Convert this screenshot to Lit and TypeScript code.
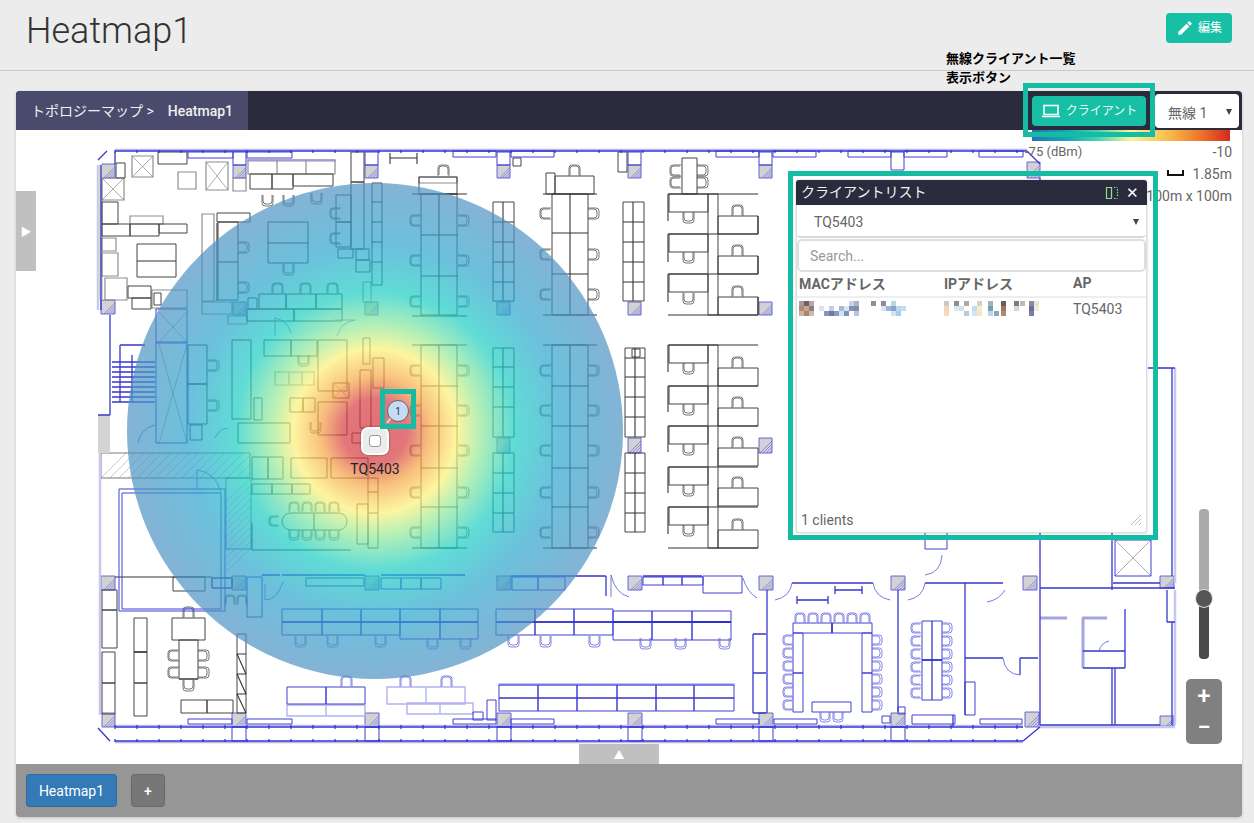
import { LitElement, html, css, svg } from "lit";
import { customElement } from "lit/decorators.js";

const rectP = (s: string) =>
  s.trim().split(/\s*;\s*/).filter(Boolean).map((t) => {
    const [x, y, w, h] = t.split(/\s+/).map(Number);
    return `M${x} ${y}h${w}v${h}h${-w}Z`;
  }).join("");
const lineP = (s: string) =>
  s.trim().split(/\s*;\s*/).filter(Boolean).map((t) => {
    const [a, b, c, d] = t.split(/\s+/).map(Number);
    return `M${a} ${b}L${c} ${d}`;
  }).join("");
const xBox = (s: string) =>
  s.trim().split(/\s*;\s*/).filter(Boolean).map((t) => {
    const [x, y, w, h] = t.split(/\s+/).map(Number);
    return `M${x} ${y}l${w} ${h}M${x + w} ${y}l${-w} ${h}`;
  }).join("");
const chair = (x: number, y: number, d: string, s = 11) => {
  const u = (o: number, z: number) => {
    const c = 3;
    if (d === "u") return `M${x + o} ${y}v${z - c}q0 ${c} ${c} ${c}h${z - 2 * c}q${c} 0 ${c} ${-c}v${-(z - c)}`;
    if (d === "d") return `M${x + o} ${y + z + o}v${-(z - c)}q0 ${-c} ${c} ${-c}h${z - 2 * c}q${c} 0 ${c} ${c}v${z - c}`;
    if (d === "l") return `M${x} ${y + o}h${z - c}q${c} 0 ${c} ${c}v${z - 2 * c}q0 ${c} ${-c} ${c}h${-(z - c)}`;
    return `M${x + z + o} ${y + o}h${-(z - c)}q${-c} 0 ${-c} ${c}v${z - 2 * c}q0 ${c} ${c} ${c}h${z - c}`;
  };
  return u(0, s) + u(1, s - 2);
};
const chairs = (s: string) =>
  s.trim().split(/\s*;\s*/).filter(Boolean).map((t) => {
    const [x, y, d, z] = t.split(/\s+/);
    return chair(+x, +y, d, z ? +z : 11);
  }).join("");

const pillars: [number, number, number, number][] = [];
for (const x of [233, 365, 497, 628, 759]) pillars.push([x, 165, 13, 13]);
for (const x of [233, 365, 497, 628, 759]) pillars.push([x, 302, 13, 13]);
for (const x of [497, 628, 759]) pillars.push([x, 438, 13, 15]);
for (const x of [232, 365, 497, 628, 759, 891, 1023]) pillars.push([x, 576, 14, 14]);
for (const x of [232, 365, 497, 628, 759, 891]) pillars.push([x, 713, 14, 14]);
pillars.push([101, 300, 14, 14], [101, 576, 14, 14], [102, 713, 13, 14], [102, 164, 13, 14], [1025, 712, 14, 15], [1160, 576, 14, 12], [1160, 716, 14, 10], [1027, 162, 13, 16]);
const pillarFill = pillars.map(([x, y, w, h]) => `M${x} ${y}h${w}v${h}h${-w}Z`).join("");
const pillarHatch = pillars.map(([x, y, w, h]) => {
  let p = "";
  for (let i = 1; i <= 4; i++) {
    const k = (i * h) / 5;
    p += `M${x + w} ${y + k}L${x + w - (h - k)} ${y + h}`;
  }
  return p;
}).join("");

let ticks = "";
for (let x = 115; x < 1025; x += 22) ticks += `M${x} 150v3M${x} 725v4M${x} 739v3`;

const kRects = rectP(`158 152 29 12; 116 163 9 15; 102 202 16 22; 102 224 28 12; 130 224 29 12; 159 224 28 9; 137 244 39 33; 128 286 23 12; 132 298 19 11; 154 293 7 12;
 250 174 22 15; 272 174 21 15; 293 174 40 12; 351 152 13 30; 351 182 13 67; 336 195 15 27; 336 222 15 25; 217 213 33 9; 218 222 20 78; 259 294 27 15; 286 294 30 15; 316 294 26 15; 247 309 47 12; 294 309 48 12;
 268 222 40 41; 338 249 15 9; 356 249 13 11; 356 260 14 12; 248 298 9 11; 372 183 10 102;
 188 345 19 39; 188 384 19 40; 232 340 19 79; 264 340 27 16; 291 340 26 16; 318 340 29 51; 333 383 16 15; 290 398 13 14; 303 398 12 14; 254 398 8 22; 318 402 29 33; 360 370 11 58; 373 358 11 30; 363 338 7 26; 238 423 52 20; 352 433 10 10; 190 425 12 15;
 421 194 36 121; 421 345 36 203; 419 177 38 17;
 493 202 21 99; 552 194 36 121; 555 176 39 18; 546 173 9 21; 623 202 21 99; 513 158 8 8; 618 152 9 20; 682 158 15 36;
 669 194 39 18; 669 234 39 18; 669 274 39 18; 718 216 40 18; 718 256 40 18; 718 297 40 18; 708 194 10 121;
 669 345 39 18; 669 386 39 18; 669 426 39 18; 669 467 39 18; 669 507 39 18; 718 368 40 18; 718 408 40 18; 718 448 40 18; 718 488 40 18; 718 530 40 18; 708 345 10 203;
 493 348 21 89; 493 453 21 79; 552 345 36 203; 625 348 20 89; 625 453 20 79; 632 349 8 8;
 173 577 32 14; 212 578 20 10; 172 618 33 22; 179 640 19 39; 181 700 26 13; 207 700 26 13; 237 634 9 79; 102 652 13 31; 102 683 13 31; 134 618 13 34; 134 652 13 31; 134 683 13 33; 102 610 15 38; 102 590 15 20;
 252 457 16 22; 268 457 15 22; 291 458 36 20; 331 458 37 20; 252 484 20 10; 272 484 20 10; 292 484 18 10; 368 478 10 70; 357 504 11 40`);
const gRects = rectP(`132 156 21 21; 178 172 18 17; 206 162 22 28; 102 178 22 22; 102 238 14 13; 102 253 16 23; 130 216 33 8; 105 278 22 22; 152 290 35 18; 248 160 29 14; 277 160 29 14; 306 160 29 14; 233 178 13 13; 202 214 12 87; 202 302 30 12; 228 316 19 8; 275 372 14 13; 289 372 13 13; 302 372 12 13; 419 177 38 6; 363 282 8 20`);
const kLines = lineP(`137 261 176 261; 217 223 217 301; 268 243 308 243; 218 262 238 262; 372 202 382 202; 372 222 382 222; 372 242 382 242; 372 262 382 262; 412 194 467 194; 412 316 467 316; 439 194 439 315; 421 235 458 235; 421 276 458 276;
 412 345 467 345; 412 548 467 548; 439 345 439 548; 421 386 458 386; 421 426 458 426; 421 468 458 468; 421 507 458 507;
 503 202 503 301; 493 222 514 222; 493 242 514 242; 493 262 514 262; 493 282 514 282; 543 194 597 194; 543 315 597 315; 570 194 570 315; 552 233 588 233; 552 274 588 274; 633 202 633 301; 623 222 644 222; 623 242 644 242; 623 262 644 262; 623 282 644 282;
 668 194 758 194; 668 234 758 234; 668 274 758 274; 668 315 758 315; 668 194 668 221; 668 234 668 262; 668 274 668 302; 758 216 758 234; 758 256 758 274; 758 297 758 315;
 668 345 758 345; 668 386 758 386; 668 426 758 426; 668 467 758 467; 668 507 758 507; 668 548 758 548; 668 345 668 372; 668 386 668 412; 668 426 668 452; 668 467 668 493; 668 507 668 534;
 503 348 503 437; 503 453 503 532; 493 367 514 367; 493 387 514 387; 493 407 514 407; 493 473 514 473; 493 493 514 493; 493 513 514 513; 543 345 597 345; 543 548 597 548; 570 345 570 548; 552 386 588 386; 552 426 588 426; 552 468 588 468; 552 507 588 507;
 635 348 635 437; 635 453 635 532; 625 358 645 358; 625 377 645 377; 625 397 645 397; 625 417 645 417; 625 473 645 473; 625 493 645 493; 625 513 645 513;
 237 654 246 654; 237 674 246 674; 237 694 246 694; 237 654 246 674; 237 674 246 694; 237 694 246 713; 115 577 212 577; 390 158 417 158; 390 153 390 164; 417 153 417 164; 179 679 198 679; 134 652 147 652;
 252 523 252 550; 252 550 351 550; 368 492 378 492; 368 513 378 513; 314 513 314 530`);
const bRects = rectP(`188 152 45 6; 247 152 45 6; 453 151 43 6; 511 151 43 6; 716 151 43 6; 773 151 43 6; 848 151 43 6; 904 151 43 6; 979 151 44 6; 233 152 13 13; 365 152 13 13; 497 152 13 13; 628 152 13 13; 759 152 13 13; 891 152 13 18;
 156 309 31 134; 156 342 31 1; 119 489 106 122; 122 493 99 116; 247 577 15 40; 212 578 20 10; 306 578 58 8; 381 578 20 11; 401 578 20 11; 421 578 20 11; 512 577 26 13; 538 577 27 13; 643 577 20 8; 663 577 19 8; 682 577 21 8; 703 576 39 17;
 282 609 40 13; 322 609 39 13; 361 609 39 13; 400 609 40 13; 440 609 38 13; 282 622 40 13; 322 622 39 13; 361 622 39 13; 400 622 40 17; 440 622 38 17; 496 609 39 13; 535 609 39 13; 574 609 39 13; 496 622 39 13; 535 622 39 13; 574 622 39 13; 613 611 39 29; 652 611 40 29; 692 611 39 29;
 287 687 39 17; 326 687 39 17; 499 685 39 26; 538 685 39 26; 577 685 40 26; 617 685 39 26; 656 685 38 26; 694 685 40 26; 487 700 9 20; 473 712 10 8; 188 719 44 5; 247 719 45 5; 453 719 43 5; 511 719 43 5; 716 719 43 5; 774 719 43 5; 980 719 42 5;
 232 727 14 14; 365 727 14 14; 497 727 14 14; 628 727 14 14; 759 727 14 14; 891 727 14 14; 793 623 39 10; 832 623 40 10; 793 633 10 40; 793 673 10 39; 862 633 10 40; 862 673 10 39; 812 702 39 10; 922 621 20 39; 922 660 20 40; 925 532 22 17; 965 682 10 33; 912 715 43 9; 1115 540 36 36; 882 716 8 7; 898 707 7 7`);
const bLines = lineP(`115 151 1027 151; 115 727 1023 727; 115 741 1023 741; 101 165 101 310; 115 152 115 164; 110 315 110 415; 98 415 110 415; 132 355 132 402; 112 362 155 362; 112 367 155 367; 112 372 155 372; 112 377 155 377; 112 382 155 382; 112 387 155 387; 112 392 155 392; 112 397 155 397; 112 402 155 402; 120 345 145 345; 120 345 120 402;
 282 575 365 575; 381 575 465 575; 511 576 606 576; 606 576 606 596; 262 575 280 575; 643 576 702 576; 1040 178 1040 725; 1040 725 1160 725; 1040 588 1175 588; 1067 588 1160 588; 1113 583 1160 583; 1112 530 1112 590; 1172 368 1172 576; 1148 368 1175 368; 1172 622 1172 725; 1167 590 1167 622; 1167 622 1175 622; 1112 668 1112 725; 1115 668 1115 725;
 792 583 873 583; 925 583 1003 583; 965 583 965 715; 965 658 1003 658; 1020 658 1038 658; 1020 658 1020 675; 898 590 898 712; 767 590 767 713; 835 590 862 590; 835 586 835 594; 862 586 862 594; 797 600 828 600; 797 596 797 604; 828 596 828 604; 832 623 832 633; 953 715 953 727; 282 622 478 622; 496 622 613 622; 613 622 731 622; 1083 651 1125 651; 1083 668 1125 668; 1125 609 1125 668; 499 698 734 698; 932 621 932 700; 922 660 942 660;
 98 728 110 741; 98 160 107 151; 1027 151 1040 164; 1023 741 1040 727; 753 634 766 634; 753 713 766 713; 753 634 753 713; 753 673 766 673`);
const lbRects = rectP(`407 703 33 11; 440 703 33 11; 387 687 39 17; 426 687 39 17; 287 705 39 11; 326 705 39 11; 499 684 235 1; 248 160 87 1`);
const doors = `M275 318q12 2 16 15M275 318v18M355 320q-14 2-18 16M355 320h-20M197 470q18 2 24 22M197 470v20M265 600q12 0 18-18M265 600v-16M611 575q4 18 18 22M611 575v22M743 578q4 14 14 20M1005 590q-6 10-18 12M792 583q-2 14-17 17M873 583q2 14 17 17M925 583q-2 14-17 17M925 575q16-2 17-20M1003 658q2 16 17 17M1099 651q2-8 10-10M215 438q4-9 13-10M138 443q2-14 17-18`;
const chairsK = chairs(`262 195 u; 283 195 u; 311 193 u; 330 208 r; 330 233 r; 238 242 l; 238 282 l; 272 283 d; 300 283 d; 327 283 d; 283 264 u; 208 360 l; 208 400 l; 298 355 u; 410 215 r; 410 255 r; 410 296 r; 458 215 l; 458 255 l; 458 296 l; 438 165 d;
 410 365 r; 410 405 r; 410 445 r; 410 487 r; 410 527 r; 458 365 l; 458 405 l; 458 445 l; 458 487 l; 458 527 l; 540 208 r; 540 249 r; 540 289 r; 588 208 l; 588 249 l; 588 289 l; 569 165 d; 540 365 r; 540 405 r; 540 445 r; 540 487 r; 540 527 r; 588 365 l; 588 405 l; 588 445 l; 588 487 l; 588 527 l;
 683 212 u; 683 252 u; 683 293 u; 732 205 d; 732 245 d; 732 286 d; 683 363 u; 683 404 u; 683 444 u; 683 485 u; 683 525 u; 732 357 d; 732 397 d; 732 437 d; 732 477 d; 732 519 d; 670 165 r; 670 177 r; 697 165 l; 697 177 l;
 183 607 d; 183 680 u; 168 650 r; 168 667 r; 198 650 l; 198 667 l; 225 595 d 10; 237 595 d 10; 289 502 d 10; 302 502 d 10; 315 502 d 10; 329 502 d 10; 289 530 u 10; 302 530 u 10; 315 530 u 10; 329 530 u 10; 269 516 r 10; 310 422 u`);
const chairsB = chairs(`295 636 u; 327 636 u; 375 636 u; 427 638 u; 460 638 u; 508 636 u; 540 636 u; 589 636 u; 640 638 u; 675 638 u; 719 638 u; 341 676 d; 400 676 d; 441 676 d; 795 613 d 10; 808 613 d 10; 821 613 d 10; 834 613 d 10; 847 613 d 10; 860 613 d 10;
 783 635 r 10; 783 648 r 10; 783 661 r 10; 783 674 r 10; 783 687 r 10; 783 700 r 10; 872 635 l 10; 872 648 l 10; 872 661 l 10; 872 674 l 10; 872 687 l 10; 872 700 l 10; 820 712 u 10; 833 712 u 10;
 911 623 r 10; 911 636 r 10; 911 649 r 10; 911 662 r 10; 911 675 r 10; 911 688 r 10; 942 623 l 10; 942 636 l 10; 942 649 l 10; 942 662 l 10; 942 675 l 10; 942 688 l 10`);
const xes = xBox(`132 156 21 21; 206 162 22 28; 102 178 22 22; 333 383 16 15; 1115 540 36 36; 159 312 28 30; 159 344 28 99`);
const hatchArea = (() => {
  let p = "";
  for (let i = 0; i < 18; i++) {
    const x0 = 101 + i * 9;
    p += `M${x0} 478L${Math.min(x0 + 25, 250)} ${453 + Math.max(0, x0 + 25 - 250)}`;
  }
  for (let i = 0; i < 11; i++) {
    const y0 = 478 + i * 7;
    p += `M226 ${y0 + 24}L251 ${y0}`;
  }
  return p;
})();

const macBlocks: [number, number, string][] = [[0,0,"#a89a9e"],[5,0,"#6d5f6e"],[10,0,"#b8a79a"],[0,5,"#b08a70"],[5,5,"#c2a78e"],[10,5,"#8f7a80"],[0,10,"#c9b39e"],[5,10,"#a8866c"],[10,10,"#cdbba8"],
 [20,5,"#d8e6f2"],[25,10,"#8a95b8"],[30,5,"#c6cfe2"],[30,10,"#6f7ba6"],[35,10,"#8b9ac0"],[40,5,"#a9bad8"],[40,10,"#d7e2ef"],[45,5,"#dce7f0"],[45,10,"#7e93b8"],[50,0,"#c8d4e4"],[50,5,"#7f92b5"],[55,0,"#a9b3c4"],[55,5,"#818fa8"],[55,10,"#b8c8dc"],
 [72,0,"#8f8f95"],[82,0,"#8d8d98"],[82,5,"#d8e4f2"],[87,5,"#9eb5d0"],[92,0,"#bcd4e8"],[92,5,"#7fa6cc"],[92,10,"#d0e4f4"],[97,5,"#b8d8f0"],[97,10,"#a8cfe8"],[102,5,"#c0def2"]];
const ipBlocks: [number, number, string][] = [[0,0,"#cfc6c6"],[0,5,"#f2d6b8"],[0,10,"#f5dcc0"],[10,0,"#8d8d92"],[10,5,"#dfe9f2"],[15,5,"#cfe2f0"],[20,0,"#b4a4a4"],[20,10,"#b6c9de"],[28,5,"#bfe0f2"],[28,10,"#cfe6f4"],[33,0,"#d8d0c0"],[33,5,"#f5efc8"],[33,10,"#f0e8c0"],
 [44,0,"#a0b4c4"],[44,5,"#7a9cb4"],[44,10,"#bcd6e8"],[50,10,"#8aa8c0"],[57,0,"#6e5c5c"],[57,5,"#a07860"],[57,10,"#b08870"],[70,0,"#7c7c80"],[70,5,"#d8d8dc"],[76,0,"#bcbcc0"],[85,0,"#8888a8"],[85,5,"#6c6c98"],[85,10,"#7c7ca8"],[90,0,"#e8e4d8"],[90,5,"#f0ecd8"]];

const mosaic = (b: [number, number, string][], w: number) => html`<svg class="mosaic" width=${w} height="15" viewBox="0 0 ${w} 15">
  ${b.map(([x, y, c]) => svg`<rect x=${x} y=${y} width="5" height="5" fill=${c}></rect>`)}
</svg>`;

@customElement("app-root")
export class AppRoot extends LitElement {
  static styles = css`
    :host { display: block; position: relative; width: 1254px; height: 823px; overflow: hidden; background: #ececec; font-family: Roboto, "Noto Sans CJK JP", sans-serif; color: #555; }
    .top { height: 70px; border-bottom: 1px solid #c9c9c9; display: flex; align-items: center; justify-content: space-between; padding: 0 22px 0 26px; box-sizing: content-box; }
    h1 { margin: -8px 0 0; font-size: 36px; font-weight: 300; color: #333; line-height: 44px; }
    .edit { width: 66px; height: 30px; margin-top: -14px; background: #17bfa5; color: #fff; border-radius: 4px; display: flex; align-items: center; justify-content: center; gap: 4px; font-size: 12px; }
    .edit span { margin-top: -3px; }
    .card { margin: 20px 12px 0 16px; border-radius: 4px; overflow: hidden; box-shadow: 0 1px 3px rgba(0,0,0,.18); display: flex; flex-direction: column; }
    .bar { height: 39px; background: #2a2b3d; display: flex; align-items: center; }
    .crumb { width: 232px; height: 39px; box-sizing: border-box; padding-left: 15px; background: #4a4b6c; color: #f0f0f0; font-size: 14px; display: flex; align-items: center; }
    .crumb b { font-weight: 400; margin-right: 14px; margin-top: -2px; }
    .crumb span { font-weight: 500; }
    .spacer { flex: 1; }
    .clientbtn { width: 114px; height: 30px; background: #17bfa5; color: #e8fbf7; border-radius: 4px; display: flex; align-items: center; justify-content: center; gap: 5px; font-size: 12px; margin-right: 9px; }
    .clientbtn span { margin-top: -2px; }
    .sel { width: 84px; height: 34px; box-sizing: border-box; margin-right: 3px; background: #fff; border-radius: 4px; display: flex; align-items: center; justify-content: space-between; padding: 2px 7px 0 13px; font-size: 14px; color: #666; }
    .arrow { width: 0; height: 0; border: solid transparent; border-width: 6px 3px 0; border-top-color: #444; }
    .map { position: relative; height: 634px; background: #fff; }
    .plan { position: absolute; inset: 0; display: block; }
    .legend { position: absolute; right: 10px; top: 0; width: 207px; font-size: 14px; color: #666; }
    .grad { height: 11px; margin: 0 2px 0 7px; background: linear-gradient(90deg, #2b6fb5 0%, #14a9b5 18%, #3fd0b0 32%, #f6f79a 50%, #f8c04e 68%, #ee7a2c 84%, #d42a1e 100%); }
    .lrow { display: flex; justify-content: space-between; height: 22px; line-height: 22px; }
    .lrow.end { justify-content: flex-end; align-items: center; gap: 8px; }
    .lrow.g { margin-top: 0; }
    .dbm { font-size: 13px; }
    .scale { width: 17px; height: 6px; margin-top: -3px; border: solid #111; border-width: 0 2px 2px; box-sizing: border-box; }
    .handle-l { position: absolute; left: 0; top: 61px; width: 20px; height: 80px; background: #c0c0c0; color: #fff; display: flex; align-items: center; justify-content: center; font-size: 11px; }
    .handle-b { position: absolute; left: 563px; bottom: 0; width: 80px; height: 20px; background: #c0c0c0; color: #fff; display: flex; align-items: center; justify-content: center; font-size: 11px; }
    .slider { position: absolute; left: 1183px; top: 379px; width: 10px; height: 150px; border-radius: 4px; background: linear-gradient(#ababab 0 60%, #4a4a4a 60%); }
    .knob { position: absolute; left: -3px; top: 81px; width: 16px; height: 17px; border-radius: 50%; background: #555; box-shadow: 0 0 0 1px #ddd; }
    .zoom { position: absolute; left: 1170px; top: 549px; width: 36px; height: 65px; background: #808080; border-radius: 5px; color: #fff; display: flex; flex-direction: column; align-items: center; justify-content: center; font-size: 24px; line-height: 31px; font-weight: 500; }
    .panel { position: absolute; left: 780px; top: 50px; width: 351px; height: 353px; box-sizing: border-box; background: #fff; border: 1px solid #ddd; border-top: 0; border-radius: 3px; display: flex; flex-direction: column; box-shadow: 0 0 3px rgba(0,0,0,.2); }
    .phead { height: 25px; flex: none; box-sizing: border-box; padding: 0 8px 3px 5px; background: #2a2b3d; color: #f4f4f4; font-size: 14px; display: flex; align-items: center; gap: 7px; margin: 0 -1px; border-radius: 3px 3px 0 0; }
    .phead .t { flex: 1; }
    .phead svg { margin-top: 3px; }
    .pclose { font-size: 15px; line-height: 16px; color: #fff; font-weight: 500; margin-top: 3px; }
    .psel { height: 33px; flex: none; box-sizing: border-box; border-radius: 4px; border-bottom: 2px solid #d8d8d8; display: flex; align-items: center; justify-content: space-between; padding: 2px 7px 0 17px; font-size: 14px; color: #666; }
    .psearch { height: 33px; flex: none; box-sizing: border-box; margin-top: 1px; border: 2px solid #dedede; border-radius: 5px; padding: 0 11px; display: flex; align-items: center; color: #999; font-size: 14px; }
    .thead, .trow { display: grid; grid-template-columns: 145px 129px 1fr; padding: 0 2px; font-size: 14px; box-sizing: border-box; }
    .thead { height: 26px; padding-bottom: 2px; align-items: center; font-weight: 700; color: #666; border-bottom: 2px solid #eee; }
    .trow { height: 25px; padding-bottom: 4px; align-items: center; color: #666; }
    .mosaic { display: block; }
    .pfoot { margin-top: auto; height: 26px; display: flex; align-items: center; justify-content: space-between; padding: 2px 4px 0; font-size: 14px; color: #666; box-sizing: border-box; }
    .ap { position: absolute; left: 345px; top: 297px; width: 28px; height: 28px; box-sizing: border-box; background: #ececec; border: 2px solid #fff; border-radius: 7px; display: flex; align-items: center; justify-content: center; box-shadow: 0 0 2px rgba(0,0,0,.5); }
    .ap i { width: 12px; height: 12px; box-sizing: border-box; border: 1px solid #999; border-radius: 3px; background: #fff; }
    .aplabel { position: absolute; left: 329px; top: 330px; width: 60px; text-align: center; font-size: 14px; color: #222; line-height: 18px; }
    .dot { position: absolute; left: 371px; top: 270px; width: 22px; height: 22px; box-sizing: border-box; border: 1px solid #666; border-radius: 50%; background: #c6dcf6; color: #333; font-size: 10px; display: flex; align-items: center; justify-content: center; }
    .foot { height: 53px; background: #969696; display: flex; align-items: center; padding: 0 10px; gap: 14px; box-sizing: border-box; }
    .tab { height: 33px; box-sizing: border-box; border-radius: 4px; display: flex; align-items: center; justify-content: center; color: #fff; font-size: 14px; border: 1px solid rgba(0,0,0,.12); }
    .tab.on { width: 91px; background: #337ab7; }
    .tab.add { width: 34px; background: #777; font-weight: 500; }
    .frame { position: absolute; box-sizing: border-box; border: 5px solid #16bba4; pointer-events: none; }
    .f1 { left: 1023px; top: 83px; width: 132px; height: 54px; }
    .f2 { left: 788px; top: 171px; width: 370px; height: 369px; }
    .f3 { left: 380px; top: 389px; width: 36px; height: 40px; }
    .note { position: absolute; left: 946px; top: 48px; font-size: 13px; font-weight: 700; color: #000; line-height: 19px; white-space: nowrap; font-family: "Noto Sans CJK JP", sans-serif; }
  `;

  render() {
    return html`
      <header class="top">
        <h1>Heatmap1</h1>
        <div class="edit">
          <svg width="18" height="18" viewBox="0 0 24 24" fill="#fff"><path d="M3 17.25V21h3.75L17.81 9.94l-3.75-3.75L3 17.25zM20.71 7.04a1 1 0 0 0 0-1.41l-2.34-2.34a1 1 0 0 0-1.41 0l-1.83 1.83 3.75 3.75 1.83-1.83z"/></svg>
          <span>編集</span>
        </div>
      </header>
      <section class="card">
        <div class="bar">
          <div class="crumb"><b>トポロジーマップ &gt;</b><span>Heatmap1</span></div>
          <div class="spacer"></div>
          <div class="clientbtn">
            <svg width="20" height="14" viewBox="0 0 20 14" fill="none" stroke="#fff" stroke-width="1.6"><rect x="3" y="1.5" width="14" height="9"/><path d="M1 12.5h18"/></svg>
            <span>クライアント</span>
          </div>
          <div class="sel"><span>無線 1</span><i class="arrow"></i></div>
        </div>
        <div class="map">
          <svg class="plan" width="1226" height="634" viewBox="16 130 1226 634" fill="none">
            <defs>
              <radialGradient id="heat" cx="375" cy="431" r="248" gradientUnits="userSpaceOnUse">
                <stop offset="0" stop-color="#d4323c"/>
                <stop offset=".13" stop-color="#d63c42"/>
                <stop offset=".22" stop-color="#f5a545"/>
                <stop offset=".33" stop-color="#fcf178"/>
                <stop offset=".43" stop-color="#8fe89a"/>
                <stop offset=".56" stop-color="#1ccdc4"/>
                <stop offset=".75" stop-color="#2da5cd"/>
                <stop offset="1" stop-color="#4f92c3"/>
              </radialGradient>
            </defs>
            <path d=${pillarFill} fill="#d2d2d2"/>
            <path d=${pillarHatch} stroke="#7a7ae2" stroke-width=".8"/>
            <path d=${pillarFill} stroke="#5a5ad8" stroke-width=".9"/>
            <path d=${hatchArea} stroke="#bdbdbd" stroke-width=".8"/>
            <path d="M101 453h149v25H101ZM226 478h25v71h-25Z" stroke="#555" stroke-width=".8"/>
            <path d=${lbRects} stroke="#b2b2f0" stroke-width="1.4"/>
            <path d="M115 149.5H1027M115 725.5H1023M115 742.5H1023" stroke="#b9b9f2" stroke-width="1.4"/>
            <path d="M98 165v145M100 415v300M1175 368v215M1175 590v135M1040 727h135" stroke="#c8c8ee" stroke-width="2.5"/>
            <path d="M98 165h5v135h-5ZM98 415h12v38H98Z" fill="#d4d4d4"/>
            <path d="M1040 618h27M1082 618h25M1083 618v50" stroke="#a4a4e4" stroke-width="3"/>
            <path d=${gRects} stroke="#8e8e8e" stroke-width="1.2"/>
            <path d=${kRects} stroke="#444" stroke-width="1"/>
            <path d=${kLines} stroke="#333" stroke-width="1.1"/>
            <rect x="282" y="513" width="65" height="17" rx="8.5" stroke="#444"/>
            <path d=${xes} stroke="#8a8a8a" stroke-width=".7"/>
            <path d=${chairsK} stroke="#555" stroke-width=".8"/>
            <path d=${bRects} stroke="#3f3fd4" stroke-width="1"/>
            <path d=${bLines} stroke="#3636cc" stroke-width="1.3"/>
            <path d=${ticks} stroke="#3030c8" stroke-width="1.2"/>
            <path d=${doors} stroke="#6a6ad8" stroke-width=".9"/>
            <path d=${chairsB} stroke="#6a6ae0" stroke-width=".8"/>
            <path d="M613 622h118" stroke="#3030d0" stroke-width="2"/>
            <circle cx="375" cy="431" r="248" fill="url(#heat)" opacity=".7"/>
            <path d="M396 411L387 423" stroke="#d8d8d8" stroke-width="2"/>
          </svg>
          <div class="legend">
            <div class="grad"></div>
            <div class="lrow g"><span class="dbm">-75 (dBm)</span><span>-10</span></div>
            <div class="lrow end"><i class="scale"></i><span>1.85m</span></div>
            <div class="lrow end"><span>100m x 100m</span></div>
          </div>
          <div class="handle-l">▶</div>
          <div class="handle-b">▲</div>
          <div class="slider"><div class="knob"></div></div>
          <div class="zoom"><span>+</span><span>−</span></div>
          <div class="dot">1</div>
          <div class="ap"><i></i></div>
          <div class="aplabel">TQ5403</div>
          <div class="panel">
            <div class="phead">
              <span class="t">クライアントリスト</span>
              <svg width="14" height="14" viewBox="0 0 14 14" fill="none" stroke="#8fe08a" stroke-width="1.2"><path d="M1.5 1.5h5v11h-5z"/><path d="M6.5 1.5v11M9 1.5h3.5M9 12.5h3.5M12.5 3v8" stroke-dasharray="1.5 1.2"/></svg>
              <span class="pclose">✕</span>
            </div>
            <div class="psel"><span>TQ5403</span><i class="arrow"></i></div>
            <div class="psearch">Search...</div>
            <div class="thead"><span>MACアドレス</span><span>IPアドレス</span><span>AP</span></div>
            <div class="trow">${mosaic(macBlocks, 107)}${mosaic(ipBlocks, 97)}<span>TQ5403</span></div>
            <div class="pfoot">
              <span>1 clients</span>
              <svg width="12" height="12" viewBox="0 0 12 12" stroke="#bbb" stroke-width="1"><path d="M11 1L1 11M11 5L5 11M11 9L9 11"/></svg>
            </div>
          </div>
        </div>
        <div class="foot">
          <div class="tab on">Heatmap1</div>
          <div class="tab add">+</div>
        </div>
      </section>
      <div class="frame f1"></div>
      <div class="frame f2"></div>
      <div class="frame f3"></div>
      <div class="note">無線クライアント一覧<br />表示ボタン</div>
    `;
  }
}
